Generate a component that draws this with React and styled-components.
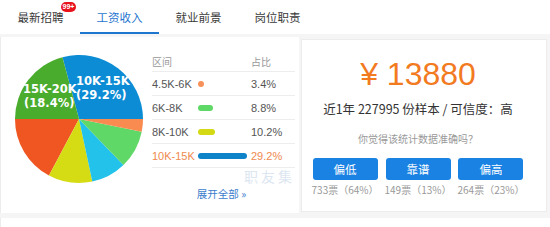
import React from "react";
import styled, { createGlobalStyle } from "styled-components";

const GlobalStyle = createGlobalStyle`
  html, body {
    margin: 0;
    padding: 0;
    background: #f5f5f5;
    font-family: "Noto Sans CJK SC", "Liberation Sans", sans-serif;
  }
`;

const tabs = ["最新招聘", "工资收入", "就业前景", "岗位职责"];

const rows = [
  { range: "4.5K-6K", pct: 3.4, color: "#f7915a" },
  { range: "6K-8K", pct: 8.8, color: "#5ed866" },
  { range: "8K-10K", pct: 10.2, color: "#d3d912" },
  { range: "10K-15K", pct: 29.2, color: "#0f83c8", active: true },
];

// slices, counter-clockwise degrees from east
const slices = [
  { from: 0, to: 105, color: "#0c8cd4" },
  { from: 105, to: 180, color: "#4aac2d" },
  { from: 180, to: 242, color: "#ef5621" },
  { from: 242, to: 282, color: "#d6dc14" },
  { from: 282, to: 314, color: "#22c2ea" },
  { from: 314, to: 348.5, color: "#5fd867" },
  { from: 348.5, to: 360, color: "#f98b50" },
];

const votes = [
  { label: "偏低", count: "733票（64%）" },
  { label: "靠谱", count: "149票（13%）" },
  { label: "偏高", count: "264票（23%）" },
];

const slicePath = (cx, cy, r, from, to) => {
  const a1 = (from * Math.PI) / 180;
  const a2 = (to * Math.PI) / 180;
  const x1 = cx + r * Math.cos(a1);
  const y1 = cy - r * Math.sin(a1);
  const x2 = cx + r * Math.cos(a2);
  const y2 = cy - r * Math.sin(a2);
  const large = to - from > 180 ? 1 : 0;
  return `M${cx},${cy} L${x1},${y1} A${r},${r} 0 ${large} 0 ${x2},${y2} Z`;
};

const Page = styled.div`
  width: 550px;
  height: 227px;
  overflow: hidden;
`;

const TabBar = styled.div`
  display: flex;
  height: 34px;
  background: #fff;
  padding-left: 1px;
`;

const Tab = styled.div`
  position: relative;
  width: 79px;
  display: flex;
  align-items: center;
  justify-content: center;
  font-size: 11.5px;
  color: ${(p) => (p.active ? "#1f76cf" : "#3a3a3a")};
  border-bottom: 2px solid ${(p) => (p.active ? "#1f76cf" : "transparent")};
  box-sizing: border-box;
  padding-top: 2px;
`;

const Badge = styled.span`
  position: absolute;
  top: 2px;
  left: 60px;
  width: 15px;
  height: 10px;
  border-radius: 6px;
  background: #e8131c;
  color: #fff;
  font-family: "Liberation Sans", sans-serif;
  font-size: 7px;
  font-weight: bold;
  line-height: 10px;
  text-align: center;
`;

const Content = styled.div`
  display: flex;
  gap: 2px;
  padding-top: 3px;
`;

const LeftPanel = styled.div`
  display: flex;
  width: 299px;
  height: 176px;
  background: #fff;
  border-left: 1px solid #ececec;
  box-sizing: border-box;
`;

const PieBox = styled.div`
  width: 151px;
  flex-shrink: 0;
`;

const Table = styled.div`
  position: relative;
  width: 143px;
  padding-top: 15px;
`;

const HeadRow = styled.div`
  display: flex;
  height: 19px;
  align-items: center;
  border-bottom: 1px solid #ededed;
  font-size: 10px;
  color: #999;
`;

const Row = styled.div`
  display: flex;
  height: 23px;
  align-items: center;
  border-bottom: 1px solid #ededed;
  font-family: "Liberation Sans", sans-serif;
  font-size: 11px;
  color: ${(p) => (p.active ? "#ef8a4e" : "#555")};
`;

const RangeCell = styled.div`
  width: 46px;
`;

const BarCell = styled.div`
  width: 53px;
  display: flex;
  align-items: center;
`;

const Bar = styled.div`
  height: 6px;
  border-radius: 3px;
  background: ${(p) => p.color};
`;

const Expand = styled.div`
  margin-top: 19px;
  text-align: center;
  font-size: 10.5px;
  line-height: 14px;
  color: #3a7dcc;
  padding-right: 4px;
`;

const Watermark = styled.div`
  position: absolute;
  left: 92px;
  top: 132px;
  font-size: 14px;
  line-height: 15px;
  letter-spacing: 3px;
  white-space: nowrap;
  color: rgba(190, 208, 230, 0.55);
`;

const RightCard = styled.div`
  width: 246px;
  height: 173px;
  margin-top: 2px;
  background: #fff;
  border: 1px solid #ececec;
  box-sizing: border-box;
  padding: 16px 12px 0 0;
  display: flex;
  flex-direction: column;
  align-items: center;
`;

const Price = styled.div`
  font-family: "Liberation Sans", sans-serif;
  font-size: 32px;
  line-height: 36px;
  color: #f27a1f;
`;

const Sample = styled.div`
  margin-top: 8px;
  font-size: 12.5px;
  line-height: 18px;
  color: #333;
`;

const Question = styled.div`
  margin-top: 14px;
  font-size: 10px;
  line-height: 14px;
  color: #999;
`;

const VoteRow = styled.div`
  display: flex;
  gap: 6px;
  margin-top: 12px;
`;

const VoteCol = styled.div`
  display: flex;
  flex-direction: column;
  align-items: center;
`;

const VoteButton = styled.div`
  width: 65px;
  height: 22px;
  border-radius: 3px;
  background: #1a82e3;
  color: #fff;
  font-size: 11.5px;
  display: flex;
  align-items: center;
  justify-content: center;
`;

const VoteCount = styled.div`
  margin-top: 3px;
  font-size: 10px;
  line-height: 14px;
  color: #999;
  white-space: nowrap;
`;

const BottomStrip = styled.div`
  margin-top: 5px;
  height: 20px;
  background: #fff;
  border-left: 1px solid #ececec;
`;

const PieLabel = styled.text`
  font-family: "DejaVu Sans", sans-serif;
  font-weight: bold;
  font-size: 11.5px;
  fill: #fff;
`;

const Pie = () => (
  <svg width="151" height="176" viewBox="0 0 151 176">
    {slices.map((s, i) => (
      <path key={i} d={slicePath(78, 82, 64, s.from, s.to)} fill={s.color} />
    ))}
    <PieLabel x="75" y="48">10K-15K</PieLabel>
    <PieLabel x="75" y="62">(29.2%)</PieLabel>
    <PieLabel x="22" y="56">15K-20K</PieLabel>
    <PieLabel x="23" y="70">(18.4%)</PieLabel>
  </svg>
);

export default function App() {
  return (
    <Page>
      <GlobalStyle />
      <TabBar>
        {tabs.map((t, i) => (
          <Tab key={t} active={i === 1}>
            {t}
            {i === 0 && <Badge>99+</Badge>}
          </Tab>
        ))}
      </TabBar>
      <Content>
        <LeftPanel>
          <PieBox>
            <Pie />
          </PieBox>
          <Table>
            <HeadRow>
              <RangeCell>区间</RangeCell>
              <BarCell />
              <div>占比</div>
            </HeadRow>
            {rows.map((r) => (
              <Row key={r.range} active={r.active}>
                <RangeCell>{r.range}</RangeCell>
                <BarCell>
                  <Bar color={r.color} style={{ width: `${r.pct * 1.68}px` }} />
                </BarCell>
                <div>{r.pct}%</div>
              </Row>
            ))}
            <Expand>展开全部 »</Expand>
            <Watermark>职友集</Watermark>
          </Table>
        </LeftPanel>
        <RightCard>
          <Price>¥ 13880</Price>
          <Sample>近1年 227995 份样本 / 可信度：高</Sample>
          <Question>你觉得该统计数据准确吗？</Question>
          <VoteRow>
            {votes.map((v) => (
              <VoteCol key={v.label}>
                <VoteButton>{v.label}</VoteButton>
                <VoteCount>{v.count}</VoteCount>
              </VoteCol>
            ))}
          </VoteRow>
        </RightCard>
      </Content>
      <BottomStrip />
    </Page>
  );
}
